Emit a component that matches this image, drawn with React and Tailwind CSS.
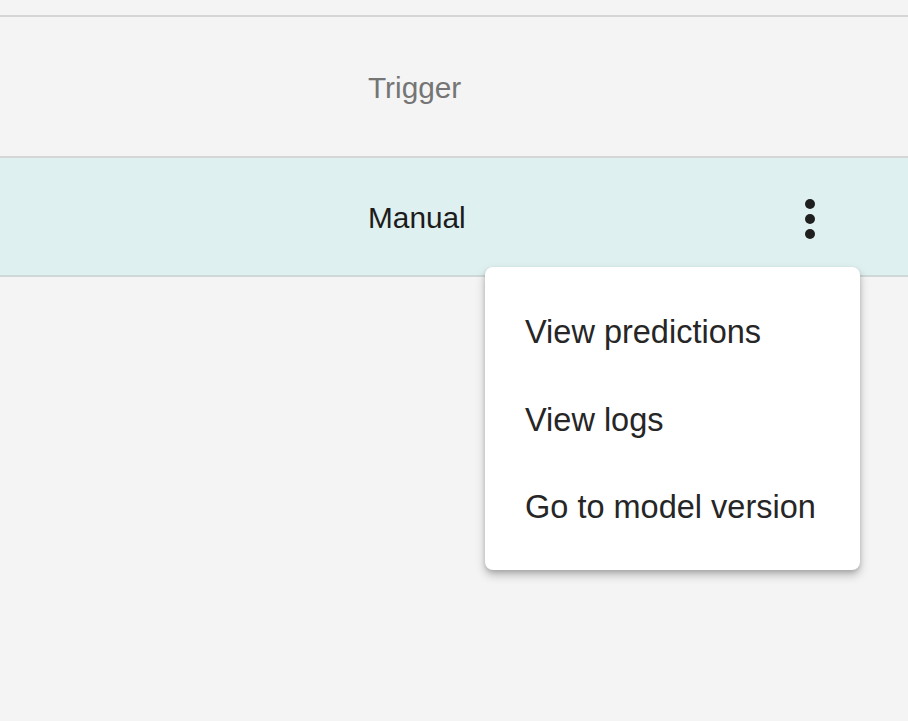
import { useState } from 'react'

const MENU_ITEMS = ['View predictions', 'View logs', 'Go to model version']

function KebabIcon() {
  return (
    <svg width="12" height="42" viewBox="0 0 12 42" className="text-[#1f1f1f]">
      <circle cx="6" cy="6" r="5" fill="currentColor" />
      <circle cx="6" cy="21" r="5" fill="currentColor" />
      <circle cx="6" cy="36" r="5" fill="currentColor" />
    </svg>
  )
}

export default function App() {
  const [open, setOpen] = useState(true)

  return (
    <div className="relative w-[908px] h-[721px] overflow-hidden bg-[#f4f4f4] font-['Liberation_Sans',Arial,sans-serif]">
      <div className="h-[15px]" />

      {/* Header row */}
      <div className="h-[143px] border-y-2 border-[#d6d6d6] flex items-center pl-[368px] pt-[4px]">
        <span className="text-[29.8px] text-[#757575]">Trigger</span>
      </div>

      {/* Selected run row */}
      <div className="h-[119px] border-b-2 border-[#cfd8d8] bg-[#dff0f0] flex items-center pl-[368px] pt-[3px]">
        <span className="text-[29.8px] text-[#1c1c1c]">Manual</span>
        <button
          onClick={() => setOpen(!open)}
          className="ml-auto mr-[92px] mt-[2px] w-[12px] flex items-center justify-center"
        >
          <KebabIcon />
        </button>
      </div>

      {/* Row actions menu */}
      {open && (
        <div className="absolute left-[485px] top-[267px] w-[375px] rounded-lg bg-white pt-[22px] pb-[18px] shadow-[0_5px_10px_rgba(0,0,0,0.25),0_2px_4px_rgba(0,0,0,0.12)]">
          {MENU_ITEMS.map(label => (
            <div
              key={label}
              className="h-[87.5px] flex items-center pl-[40px] text-[32.5px] text-[#262626] cursor-pointer"
            >
              {label}
            </div>
          ))}
        </div>
      )}
    </div>
  )
}
